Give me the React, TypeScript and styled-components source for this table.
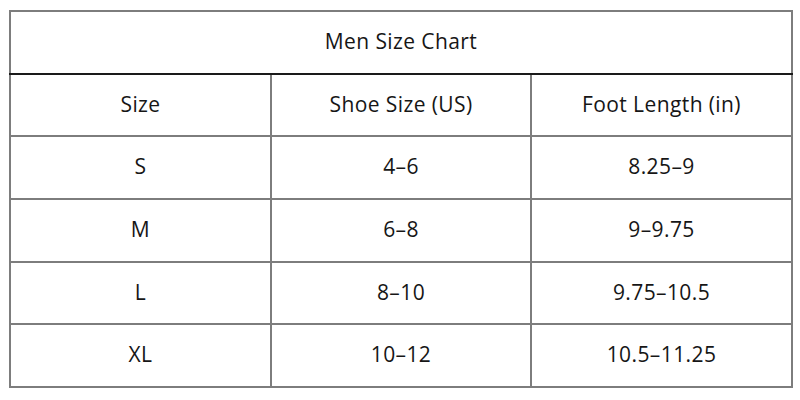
import React from "react";
import styled, { createGlobalStyle } from "styled-components";

const Global = createGlobalStyle`
  html, body { margin: 0; padding: 0; background: #ffffff; }
  body { font-family: "Open Sans", "Noto Sans", sans-serif; }
`;

const Page = styled.div`
  width: 800px;
  height: 400px;
  padding: 10px 9px 0 9px;
  box-sizing: border-box;
  background: #ffffff;
`;

const Table = styled.table`
  width: 782px;
  height: 376px;
  border-collapse: collapse;
  table-layout: fixed;
  border: 2px solid #7d7d7d;
  border-bottom: 2px solid #2a2a2a;
`;

const Row = styled.tr`
  height: 62.7px;
`;

const Cell = styled.td<{ $dark?: boolean }>`
  border: 2px solid #7d7d7d;
  ${(p) => (p.$dark ? "border-bottom: 2px solid #1a1a1a;" : "")}
  text-align: center;
  vertical-align: middle;
  padding: 0 0 3px 0;
  font-size: 21px;
  color: #161616;
  letter-spacing: 0.4px;
`;

const rows = [
  ["S", "4–6", "8.25–9"],
  ["M", "6–8", "9–9.75"],
  ["L", "8–10", "9.75–10.5"],
  ["XL", "10–12", "10.5–11.25"],
];

export default function App() {
  return (
    <>
      <Global />
      <Page>
        <Table>
          <colgroup>
            <col style={{ width: 261 }} />
            <col style={{ width: 260 }} />
            <col style={{ width: 261 }} />
          </colgroup>
          <tbody>
            <Row>
              <Cell colSpan={3} $dark>
                Men Size Chart
              </Cell>
            </Row>
            <Row>
              <Cell>Size</Cell>
              <Cell>Shoe Size (US)</Cell>
              <Cell>Foot Length (in)</Cell>
            </Row>
            {rows.map((r) => (
              <Row key={r[0]}>
                {r.map((c, i) => (
                  <Cell key={i}>{c}</Cell>
                ))}
              </Row>
            ))}
          </tbody>
        </Table>
      </Page>
    </>
  );
}
